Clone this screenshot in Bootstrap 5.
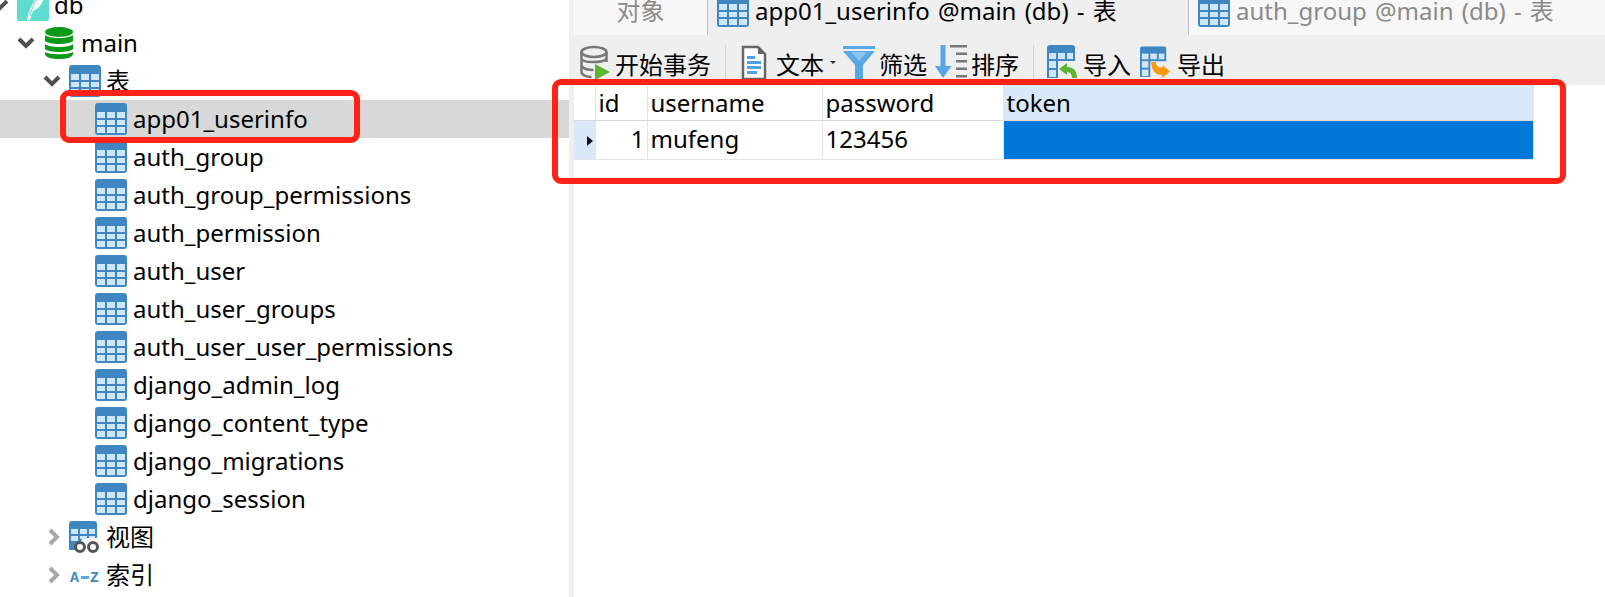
<!DOCTYPE html>
<html lang="zh-CN">
<head>
<meta charset="UTF-8">
<title>app01_userinfo @main (db) - 表</title>
<link href="https://cdn.jsdelivr.net/npm/bootstrap@5.3.0/dist/css/bootstrap.min.css" rel="stylesheet">
<style>
html, body { height: 100%; overflow: hidden; }
body { font-family: "Noto Sans", "Noto Sans CJK SC", sans-serif; font-size: 24px; color: #000; background: #fff; }
.app { height: 597px; position: relative; }
.side { width: 569px; flex: none; margin-top: -14px; }
.gutter { width: 5px; flex: none; background: #efefef; }
.main-pane { flex: 1; min-width: 0; }
.tree-row { height: 38px; line-height: 38px; white-space: nowrap; }
.tree-row.picked { background: #d8d8d8; }
.lv1 { padding-left: 17px; }
.lv2 { padding-left: 43px; }
.lv3 { padding-left: 95px; }
.chev { width: 18px; height: 14px; flex: none; }
.chev-shut { width: 14px; height: 18px; margin-left: 4px; }
.lv0 .chev { margin-left: -9px; margin-right: 8px; }
.lv0 .ico-tb { margin-right: 5px; }
.lv1 .chev { margin-right: 10px; }
.lv2 .chev { margin-right: 8px; }
.ico-db { width: 28px; height: 32px; margin-right: 8px; flex: none; }
.ico-tb { width: 32px; height: 32px; margin-right: 6px; flex: none; }
.lv2 .ico-tb { margin-right: 5px; }
.tab-strip { height: 35px; background: #efefef; overflow: hidden; }
.tab-item { height: 36px; line-height: 22px; white-space: nowrap; overflow: hidden; word-spacing: 2px; }
.tab-off { background: #f7f7f7; border-bottom: 1px solid #bbb; color: #8a8a8a; }
.tab-obj { width: 134px; text-align: center; border-right: 1px solid #bbb; }
.tab-on { width: 480px; padding-left: 9px; }
.tab-other { flex: 1; border-left: 1px solid #bbb; padding-left: 9px; }
.tab-item .ico-tb { margin-top: -5px; margin-right: 6px; }
.tool-bar { height: 50px; background: #efefef; padding: 10px 0 0 6px; white-space: nowrap; }
.tool-sep { width: 1px; height: 36px; background: #d4d4d4; flex: none; }
.tool-ico { width: 32px; height: 36px; flex: none; }
.tool-ico.slim { width: 30px; }
.tool-ico.doc { width: 26px; }
.tool-txt { line-height: 40px; }
.begin-txt { width: 96px; }
.gap4 { margin-left: 4px; } .gap5 { margin-left: 5px; } .gap6 { margin-left: 6px; }
.gap7 { margin-left: 7px; } .gap8 { margin-left: 8px; } .gap9 { margin-left: 9px; } .gap13 { margin-left: 13px; }
.gap14 { margin-left: 14px; } .gap15 { margin-left: 15px; }
.tiny-caret { width: 0; height: 0; border-left: 3px solid transparent; border-right: 3px solid transparent; border-top: 3px solid #333; flex: none; }
.data-grid { table-layout: fixed; width: 959px; border-collapse: collapse; margin: 0; font-size: 24px; }
.data-grid td { height: 39px; padding: 1px 3px 0; line-height: 34px; border: 1px solid #e4e4e4; border-top: 0; border-left: 0; background: #fff; color: #000; box-shadow: none; }
.data-grid .head-row td { height: 35px; padding-top: 1px; border-bottom-color: #d8d8d8; }
.data-grid .row-mark { background: #d9e9f7; padding: 0; }
.data-grid .num-cell { padding-right: 2px; }
.row-arrow { display: block; width: 0; height: 0; margin: 15px 0 0 13px; border-top: 5px solid transparent; border-bottom: 5px solid transparent; border-left: 6px solid #111; }
.data-grid .hot-col { background: #d9e9f7; }
.data-grid .cell-sel { background: #0078d7; }
.col-mark { width: 21px; } .col-id { width: 52px; } .col-user { width: 175px; } .col-pass { width: 181px; } .col-token { width: 530px; }
.red-frame { position: absolute; border: 6px solid #ff2216; border-radius: 9px; pointer-events: none; }
.frame-a { left: 60px; top: 90px; width: 300px; height: 53px; }
.frame-b { left: 552px; top: 79px; width: 1014px; height: 105px; }
</style>
</head>
<body>
<svg width="0" height="0" class="position-absolute">
  <symbol id="tb" viewBox="0 0 32 32">
    <rect x="0" y="0" width="32" height="32" rx="3" fill="#3f87c2"/>
    <g fill="#cfe6f9"><rect x="2" y="9" width="8" height="6"/><rect x="12" y="9" width="8" height="6"/><rect x="22" y="9" width="8" height="6"/><rect x="2" y="17" width="8" height="5"/><rect x="12" y="17" width="8" height="5"/><rect x="22" y="17" width="8" height="5"/><rect x="2" y="24" width="8" height="6"/><rect x="12" y="24" width="8" height="6"/><rect x="22" y="24" width="8" height="6"/></g>
  </symbol>
  <symbol id="tb-cut" viewBox="0 0 30 36">
    <path d="M0 33V3a3 3 0 0 1 3-3h22a3 3 0 0 1 3 3v13H11v17z" fill="#3f87c2"/>
    <g fill="#cfe6f9"><rect x="2" y="8" width="7" height="6"/><rect x="11" y="8" width="7" height="6"/><rect x="20" y="8" width="6" height="6"/><rect x="2" y="16" width="7" height="7"/><rect x="2" y="25" width="7" height="7"/></g>
  </symbol>
  <symbol id="open" viewBox="0 0 18 14"><path d="M2 3l7 7 7-7" fill="none" stroke="#505050" stroke-width="4"/></symbol>
  <symbol id="shut" viewBox="0 0 14 18"><path d="M3 2l7 7-7 7" fill="none" stroke="#a8a8a8" stroke-width="4"/></symbol>
</svg>
<div class="app d-flex">
  <div class="side">
    <div class="tree-row lv0 d-flex align-items-center">
      <svg class="chev"><use href="#open"/></svg>
      <svg class="ico-tb" viewBox="0 0 32 32"><rect width="32" height="32" rx="2" fill="#5fdcd0"/><path d="M10 31C12 19 18 9 27 0c2 9-2 18-11 22l-3 9z" fill="#fff"/><path d="M13 27C15 18 19 11 25 5" fill="none" stroke="#5fdcd0" stroke-width="1"/></svg>
      <span>db</span>
    </div>
    <div class="tree-row lv1 d-flex align-items-center">
      <svg class="chev"><use href="#open"/></svg>
      <svg class="ico-db" viewBox="0 0 28 32"><ellipse cx="14" cy="5" rx="14" ry="5" fill="#0b9a17"/><path d="M0 8c4 4 24 4 28 0v6c-4 4-24 4-28 0zM0 17c4 4 24 4 28 0v5c-4 4-24 4-28 0zM0 25c4 3 24 3 28 0v2c0 3-6 5-14 5S0 30 0 27z" fill="#0b9a17"/></svg>
      <span>main</span>
    </div>
    <div class="tree-row lv2 d-flex align-items-center">
      <svg class="chev"><use href="#open"/></svg>
      <svg class="ico-tb"><use href="#tb"/></svg>
      <span>表</span>
    </div>
    <div class="tree-row picked lv3 d-flex align-items-center"><svg class="ico-tb"><use href="#tb"/></svg><span>app01_userinfo</span></div>
    <div class="tree-row lv3 d-flex align-items-center"><svg class="ico-tb"><use href="#tb"/></svg><span>auth_group</span></div>
    <div class="tree-row lv3 d-flex align-items-center"><svg class="ico-tb"><use href="#tb"/></svg><span>auth_group_permissions</span></div>
    <div class="tree-row lv3 d-flex align-items-center"><svg class="ico-tb"><use href="#tb"/></svg><span>auth_permission</span></div>
    <div class="tree-row lv3 d-flex align-items-center"><svg class="ico-tb"><use href="#tb"/></svg><span>auth_user</span></div>
    <div class="tree-row lv3 d-flex align-items-center"><svg class="ico-tb"><use href="#tb"/></svg><span>auth_user_groups</span></div>
    <div class="tree-row lv3 d-flex align-items-center"><svg class="ico-tb"><use href="#tb"/></svg><span>auth_user_user_permissions</span></div>
    <div class="tree-row lv3 d-flex align-items-center"><svg class="ico-tb"><use href="#tb"/></svg><span>django_admin_log</span></div>
    <div class="tree-row lv3 d-flex align-items-center"><svg class="ico-tb"><use href="#tb"/></svg><span>django_content_type</span></div>
    <div class="tree-row lv3 d-flex align-items-center"><svg class="ico-tb"><use href="#tb"/></svg><span>django_migrations</span></div>
    <div class="tree-row lv3 d-flex align-items-center"><svg class="ico-tb"><use href="#tb"/></svg><span>django_session</span></div>
    <div class="tree-row lv2 d-flex align-items-center">
      <svg class="chev chev-shut"><use href="#shut"/></svg>
      <svg class="ico-tb" viewBox="0 0 32 32"><path d="M0 29V3a3 3 0 0 1 3-3h22a3 3 0 0 1 3 3v14H14l-8 12z" fill="#3f87c2"/><g fill="#cfe6f9"><rect x="2" y="8" width="7" height="5"/><rect x="11" y="8" width="7" height="5"/><rect x="20" y="8" width="6" height="5"/><rect x="2" y="15" width="7" height="5"/><rect x="11" y="15" width="7" height="3"/><rect x="20" y="15" width="6" height="2"/></g><g fill="#fff" stroke="#555" stroke-width="3"><circle cx="11" cy="26" r="4.5"/><circle cx="24" cy="26" r="4.5"/></g></svg>
      <span>视图</span>
    </div>
    <div class="tree-row lv2 d-flex align-items-center">
      <svg class="chev chev-shut"><use href="#shut"/></svg>
      <svg class="ico-tb" viewBox="0 0 32 32"><text x="1" y="23" font-family="Liberation Mono" font-size="15" font-weight="700" fill="#3f87c2">A</text><rect x="12" y="17" width="8" height="3" fill="#5aa9e6"/><text x="21" y="23" font-family="Liberation Mono" font-size="15" font-weight="700" fill="#3f87c2">Z</text></svg>
      <span>索引</span>
    </div>
  </div>
  <div class="gutter"></div>
  <div class="main-pane">
    <div class="tab-strip d-flex">
      <div class="tab-item tab-off tab-obj">对象</div>
      <div class="tab-item tab-on d-flex"><svg class="ico-tb"><use href="#tb"/></svg><span>app01_userinfo @main (db) - 表</span></div>
      <div class="tab-item tab-off tab-other d-flex"><svg class="ico-tb"><use href="#tb"/></svg><span>auth_group @main (db) - 表</span></div>
    </div>
    <div class="tool-bar d-flex align-items-start">
      <svg class="tool-ico slim" viewBox="0 0 30 36"><g fill="none" stroke="#777" stroke-width="2.5"><ellipse cx="14" cy="7" rx="12.5" ry="5"/><path d="M1.500 7v20c0 3 5 5 10 5M26.500 7v10M1.500 14c2 4 21 4 25 0M1.500 21c2 3 8 4 12 4"/></g><path d="M15 19l15 8-15 8z" fill="#5cb531"/></svg>
      <span class="tool-txt begin-txt gap5">开始事务</span>
      <div class="tool-sep gap14"></div>
      <svg class="tool-ico doc gap15" viewBox="0 0 26 36"><path d="M2 2h15l7 7v25H2z" fill="#fff" stroke="#666" stroke-width="2.5"/><path d="M17 2v7h7z" fill="#666"/><g fill="#4ea3e6"><rect x="6" y="11" width="8" height="3"/><rect x="6" y="16" width="14" height="3"/><rect x="6" y="21" width="14" height="3"/><rect x="6" y="26" width="10" height="3"/></g></svg>
      <span class="tool-txt gap9">文本</span>
      <span class="tiny-caret gap6 mt-3"></span>
      <svg class="tool-ico gap7" viewBox="0 0 32 36"><rect x="0" y="1" width="32" height="3" fill="#58a8e8"/><path d="M0 6h32L20 20v14l-8 2V20z" fill="#58a8e8"/><path d="M8 7h16l-8 9z" fill="#8cc3ef"/></svg>
      <span class="tool-txt gap4">筛选</span>
      <svg class="tool-ico gap8" viewBox="0 0 32 36"><path d="M5.500 0h5v21h6L8 33 0 21h5.500z" fill="#58a8e8"/><g fill="#777"><rect x="15" y="0" width="17" height="2.500"/><rect x="21" y="7.500" width="11" height="2.500"/><rect x="21" y="15" width="11" height="2.500"/><rect x="21" y="22.500" width="11" height="2.500"/><rect x="21" y="30" width="11" height="2.500"/></g></svg>
      <span class="tool-txt gap4">排序</span>
      <div class="tool-sep gap14"></div>
      <svg class="tool-ico slim gap13" viewBox="0 0 30 36"><use href="#tb-cut" width="30" height="36"/><path d="M12 24l8-6v4c7 0 10 4 10 11h-5c0-4-2-6-5-6v3z" fill="#5cb531"/></svg>
      <span class="tool-txt gap6">导入</span>
      <svg class="tool-ico slim gap9" viewBox="0 0 32 36"><use href="#tb-cut" width="30" height="36"/><path d="M12 17h5c0 4 2 6 7 6v-3l8 7-8 7v-3c-8 0-12-6-12-14z" fill="#f59a11"/></svg>
      <span class="tool-txt gap7">导出</span>
    </div>
    <table class="table data-grid">
      <colgroup><col class="col-mark"><col class="col-id"><col class="col-user"><col class="col-pass"><col class="col-token"></colgroup>
      <tr class="head-row"><td></td><td>id</td><td>username</td><td>password</td><td class="hot-col">token</td></tr>
      <tr><td class="row-mark"><span class="row-arrow"></span></td><td class="text-end num-cell">1</td><td>mufeng</td><td>123456</td><td class="cell-sel"></td></tr>
    </table>
  </div>
  <div class="red-frame frame-a"></div>
  <div class="red-frame frame-b"></div>
</div>
<script src="https://cdn.jsdelivr.net/npm/bootstrap@5.3.0/dist/js/bootstrap.bundle.min.js"></script>
</body>
</html>
